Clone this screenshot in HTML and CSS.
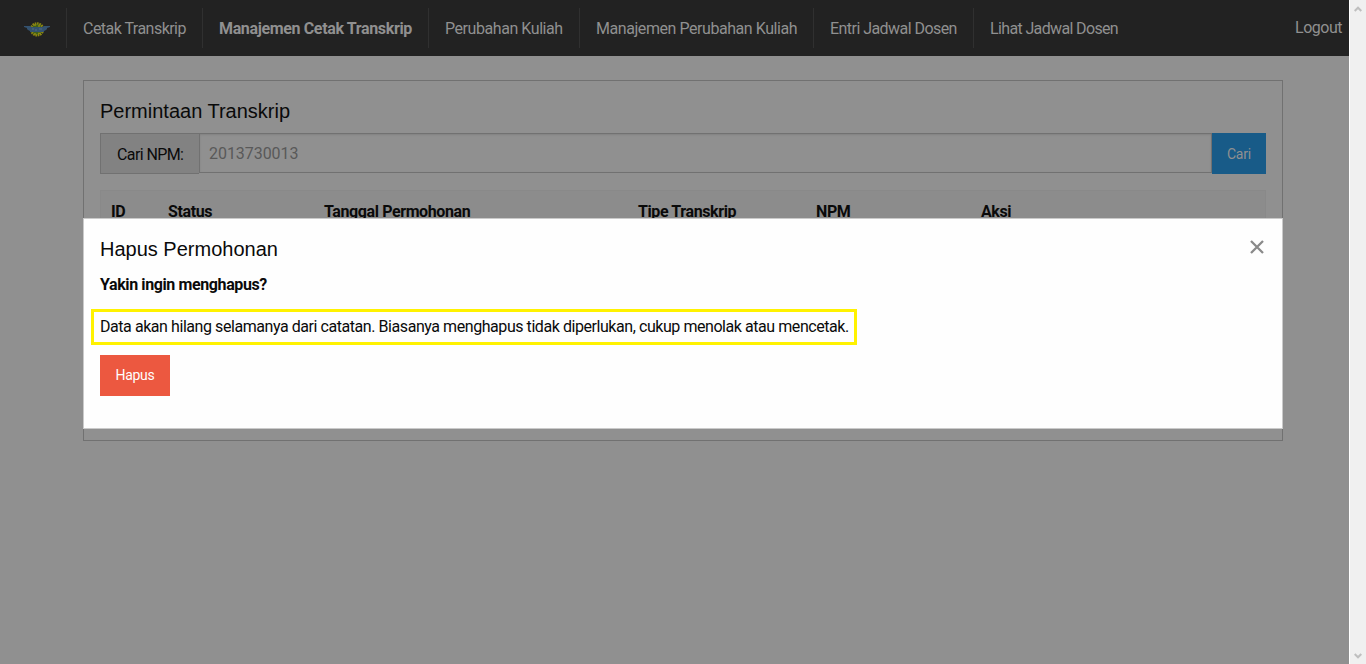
FILE: index.html
```html
<!DOCTYPE html>
<html lang="id">
<head>
<meta charset="utf-8">
<title>Manajemen Cetak Transkrip</title>
<link rel="stylesheet" href="styles.css">
</head>
<body>
<div class="page">
  <header class="topbar">
    <div class="brand">
      <svg width="26" height="16" viewBox="0 0 26 16">
        <circle cx="13" cy="7.4" r="5.6" fill="#40601a"/>
        <circle cx="13" cy="7.4" r="6" fill="none" stroke="#8b8710" stroke-width="2.4" stroke-dasharray="1.6 .7"/>
        <path d="M10 3h2M14 4h2M10 12h2M14 11.5h3" stroke="#8b8710" stroke-width="1.3"/>
        <path d="M0 4h6l2 1h10l2-1h6v1l-3 1v1l-1 1-2 1v1H6V9L4 8 3 7V6L0 5z" fill="#34526f"/>
        <path d="M8 7h2M11 8h2M15 7h3" stroke="#526c82"/>
      </svg>
    </div>
    <nav class="nav">
      <a class="item w1">Cetak Transkrip</a>
      <a class="item w2 active">Manajemen Cetak Transkrip</a>
      <a class="item w3">Perubahan Kuliah</a>
      <a class="item w4">Manajemen Perubahan Kuliah</a>
      <a class="item w5">Entri Jadwal Dosen</a>
      <a class="item w6">Lihat Jadwal Dosen</a>
    </nav>
    <a class="logout">Logout</a>
  </header>
  <main class="callout">
    <h5 class="title">Permintaan Transkrip</h5>
    <div class="search">
      <span class="label">Cari NPM:</span>
      <span class="field">2013730013</span>
      <span class="find">Cari</span>
    </div>
    <div class="thead">
      <span>ID</span><span>Status</span><span>Tanggal Permohonan</span><span>Tipe Transkrip</span><span>NPM</span><span>Aksi</span>
    </div>
  </main>
  <section class="reveal">
    <div class="reveal-head">
      <h5 class="title">Hapus Permohonan</h5>
      <svg class="close" width="14" height="14" viewBox="0 0 14 14"><path d="M1 1l12 12M13 1L1 13" stroke="#8a8a8a" stroke-width="2.3"/></svg>
    </div>
    <p class="ask">Yakin ingin menghapus?</p>
    <p class="note">Data akan hilang selamanya dari catatan. Biasanya menghapus tidak diperlukan, cukup menolak atau mencetak.</p>
    <a class="delete">Hapus</a>
  </section>
</div>
<div class="scrollbar">
  <svg width="8" height="6" viewBox="0 0 8 6"><path d="M.7 5L4 1.7 7.3 5" fill="none" stroke="#bfbfbf" stroke-width="2"/></svg>
  <svg width="8" height="6" viewBox="0 0 8 6"><path d="M.7 1L4 4.3 7.3 1" fill="none" stroke="#bfbfbf" stroke-width="2"/></svg>
</div>
</body>
</html>
```
FILE: styles.css
```css
* { box-sizing: border-box; }
body { margin: 0; height: 664px; overflow: hidden; display: flex; font: 16px/24px Roboto, sans-serif; color: #0a0a0a; white-space: nowrap; }
.page { position: relative; width: 1349px; height: 664px; background: #909090; }
.topbar { height: 56px; padding: 8px 7px 8px 0; background: #222; color: #909090; display: flex; }
.brand { width: 66px; padding: 14px 0 0 24px; }
.brand svg { display: block; }
.nav { display: flex; flex: 1; }
.item { height: 40px; padding: 9px 0 0 16px; border-left: 1px solid #303030; }
.w1 { width: 136px; letter-spacing: -.53px; }
.w2 { width: 226px; letter-spacing: -.36px; }
.w3 { width: 151px; letter-spacing: -.44px; }
.w4 { width: 234px; letter-spacing: -.44px; }
.w5 { width: 160px; letter-spacing: -.55px; }
.w6 { width: 160px; letter-spacing: -.64px; }
.active { font-weight: bold; }
.logout { padding-top: 8px; letter-spacing: -.5px; }
.callout { width: 1200px; height: 361px; margin: 24px 0 0 83px; padding: 16px; border: 1px solid #717171; }
.title { margin: 0; font: 20px/28px "Liberation Sans", Arial, sans-serif; }
.search { display: flex; height: 41px; margin-top: 8px; }
.label { width: 99px; padding: 9px 0 0 16px; background: #828282; border: 1px solid #717171; border-right: 0; letter-spacing: -.6px; }
.field { flex: 1; height: 40px; padding: 8px 8px 8px 9px; border: 1px solid #717171; color: #595959; line-height: 23px; letter-spacing: -.05px; box-shadow: inset 0 1px 2px rgba(10,10,10,.1); }
.find { width: 54px; background: #185b88; color: #909090; font-size: 14px; line-height: 42px; text-align: center; letter-spacing: -.2px; }
.thead { display: grid; grid-template-columns: 57px 156px 314px 178px 165px 1fr; height: 44px; margin-top: 16px; padding: 9px 0 0 10px; border: 1px solid #898989; background: #8c8c8c; font-weight: bold; letter-spacing: -.4px; }
.reveal { position: absolute; left: 83px; top: 218px; width: 1200px; height: 211px; padding: 16px; background: #fefefe; border: 1px solid #cacaca; }
.reveal-head { display: flex; justify-content: space-between; }
.close { margin: 5px 2px 0 0; }
.ask { margin: 10px 0 0; font-weight: bold; letter-spacing: -.39px; }
.note { width: 766px; height: 36px; margin: 12px 0 0 -9px; padding: 3px 0 0 6px; border: 3px solid #fff200; letter-spacing: -.438px; }
.delete { display: block; width: 70px; height: 41px; margin-top: 10px; background: #ec5840; color: #fefefe; font-size: 14px; line-height: 41px; text-align: center; letter-spacing: -.3px; }
.scrollbar { width: 17px; padding: 6px 4px 5px; background: #f0f0f0; border-left: 1px solid #fff; display: flex; flex-direction: column; justify-content: space-between; }
```
